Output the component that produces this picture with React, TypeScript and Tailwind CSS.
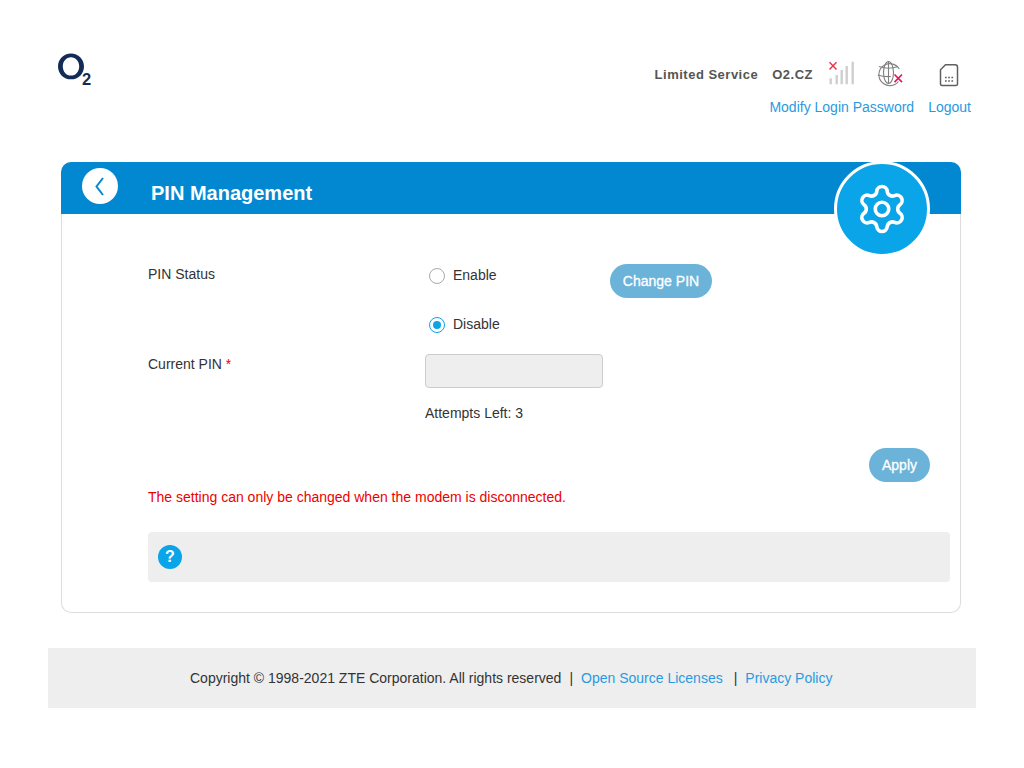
import React from "react";
import { Settings } from "lucide-react";

const Radio = ({ label, checked }: { label: string; checked?: boolean }) => (
  <div className="flex items-center h-[24px] pl-[4px]">
    <span
      className={
        checked
          ? "w-[16px] h-[16px] rounded-full border border-[#0aa5e8] flex items-center justify-center"
          : "w-[16px] h-[16px] rounded-full border border-[#aaa]"
      }
    >
      {checked && <span className="w-[8px] h-[8px] rounded-full bg-[#0aa5e8]" />}
    </span>
    <span className="ml-[8px] relative bottom-[1px]">{label}</span>
  </div>
);

const SignalIcon = () => (
  <svg width="28" height="28" viewBox="0 0 28 28" fill="none">
    <path d="M3.7 17.3v6M9.700 14v9.300M14.700 9v14.300M19.700 5v18.300M25.700 0.700v22.600" stroke="#cfcfcf" strokeWidth="2.400" />
    <path d="M2.500 1.200l7 7.200M9.500 1.200l-7 7.200" stroke="#e8384f" strokeWidth="1.500" />
  </svg>
);

const GlobeIcon = () => (
  <svg width="30" height="28" viewBox="0 0 30 28" fill="none">
    <g stroke="#808080" strokeWidth="1.100">
      <path d="M23.500 20.500A11 11 0 1 1 24.300 8" />
      <ellipse cx="13.500" cy="11.500" rx="5" ry="11" />
      <path d="M13.500 0.500v22M4 5.500q9.500 3.500 19 0M2.800 14q6 2 13 1.500" />
    </g>
    <path d="M19.500 13.500l7.500 7.700M27 13.500l-7.500 7.700" stroke="#e6185f" strokeWidth="1.700" />
  </svg>
);

const SimIcon = () => (
  <svg width="28" height="28" viewBox="0 0 28 28" fill="none">
    <path
      d="M10.500 3.800h9.700a2.300 2.300 0 0 1 2.300 2.300v16.900a1.500 1.500 0 0 1-1.500 1.500H7a1.500 1.500 0 0 1-1.500-1.500V8.800z"
      stroke="#606060"
      strokeWidth="1.500"
    />
    <path
      d="M10 16.500h1.700M13.200 16.500h1.700M16.400 16.500h1.700M10 20h1.700M13.200 20h1.700M16.400 20h1.700"
      stroke="#606060"
      strokeWidth="1.500"
    />
  </svg>
);

const Logo = () => (
  <svg width="36" height="36" viewBox="0 0 36 36">
    <path
      fillRule="evenodd"
      fill="#132c56"
      d="M14 2.500c7.300 0 13 5.700 13 12.900s-5.700 12.900-13 12.900S1 22.600 1 15.400 6.700 2.500 14 2.500zm0 3.700c-4.600 0-8.200 4.100-8.200 9.200s3.600 9.200 8.200 9.200 8.200-4.100 8.200-9.200-3.600-9.200-8.200-9.200z"
    />
    <text
      x="25"
      y="34"
      fill="#132c56"
      fontSize="16.500"
      fontWeight="700"
      fontFamily="'Liberation Sans', Arial, sans-serif"
    >
      2
    </text>
  </svg>
);

const App = () => {
  return (
    <div className="w-[1024px] h-[768px] bg-white pt-[48px] px-[48px] overflow-hidden font-['Liberation_Sans',Arial,sans-serif] text-[14px] leading-[20px] text-[#333]">
      <header className="h-[114px] flex justify-between">
        <div className="mt-[3px] ml-[9px]">
          <Logo />
        </div>
        <div className="mt-[13px] flex flex-col items-end">
          <div className="flex items-center h-[28px] mr-[13px] text-[13px] font-bold text-[#555] tracking-[0.5px]">
            <span>Limited Service</span>
            <span className="ml-[14px]">O2.CZ</span>
            <span className="ml-[14px]">
              <SignalIcon />
            </span>
            <span className="ml-[20px]">
              <GlobeIcon />
            </span>
            <span className="ml-[30px]">
              <SimIcon />
            </span>
          </div>
          <div className="mt-[8px] mr-[5px] flex gap-[14px] text-[#2a9ae0]">
            <a>Modify Login Password</a>
            <a>Logout</a>
          </div>
        </div>
      </header>

      <main className="ml-[13px] w-[900px] relative">
        <div className="h-[52px] bg-[#0288d1] rounded-t-[10px] flex items-start">
          <div className="mt-[6px] ml-[21px] w-[36px] h-[36px] rounded-full bg-white flex items-center justify-center">
            <svg width="12" height="20" viewBox="0 0 12 20" fill="none">
              <path d="M9 2L2.500 10.500 9 19" stroke="#0288d1" strokeWidth="2" />
            </svg>
          </div>
          <h1 className="ml-[33px] mt-[19px] text-[20px] leading-[24px] font-bold text-white">PIN Management</h1>
        </div>

        <div className="absolute top-[-1px] right-[31px] w-[96px] h-[96px] rounded-full bg-[#0aa5e8] border-[3px] border-white flex items-center justify-center">
          <Settings size={54} strokeWidth={1.600} color="#fff" />
        </div>

        <div className="border border-t-0 border-[#ddd] rounded-b-[10px] pl-[86px] pt-[50px] pb-[30px] flex flex-col">
          <div className="flex h-[90px]">
            <div className="w-[277px]">PIN Status</div>
            <div className="w-[185px]">
              <Radio label="Enable" />
              <div className="mt-[25px]">
                <Radio label="Disable" checked />
              </div>
            </div>
            <button className="w-[102px] h-[34px] rounded-full bg-[#6bb3d9] text-white text-[14px] [-webkit-text-stroke:0.3px_white]">
              Change PIN
            </button>
          </div>

          <div className="flex">
            <div className="w-[277px]">
              Current PIN <span className="text-[#e00]">*</span>
            </div>
            <div>
              <input
                disabled
                className="block w-[178px] h-[34px] bg-[#eee] border border-[#ccc] rounded-[4px]"
              />
              <div className="mt-[15px]">Attempts Left: 3</div>
            </div>
          </div>

          <button className="self-end mt-[25px] mr-[30px] w-[61px] h-[34px] rounded-full bg-[#6bb3d9] text-white text-[14px] [-webkit-text-stroke:0.3px_white]">
            Apply
          </button>

          <div className="mt-[5px] text-[#ee0000]">The setting can only be changed when the modem is disconnected.</div>

          <div className="mt-[25px] mr-[10px] h-[50px] rounded-[4px] bg-[#eee] flex items-center pl-[10px]">
            <span className="w-[24px] h-[24px] rounded-full bg-[#0aa5e8] text-white font-bold text-[16px] flex items-center justify-center">
              ?
            </span>
          </div>
        </div>
      </main>

      <footer className="mt-[35px] h-[60px] bg-[#eee] flex items-center pl-[142px]">
        <span>Copyright © 1998-2021 ZTE Corporation. All rights reserved</span>
        <span className="ml-[8px]">|</span>
        <a className="ml-[8px] text-[#2a9ae0]">Open Source Licenses</a>
        <span className="ml-[11px]">|</span>
        <a className="ml-[8px] text-[#2a9ae0]">Privacy Policy</a>
      </footer>
    </div>
  );
};

export default App;
